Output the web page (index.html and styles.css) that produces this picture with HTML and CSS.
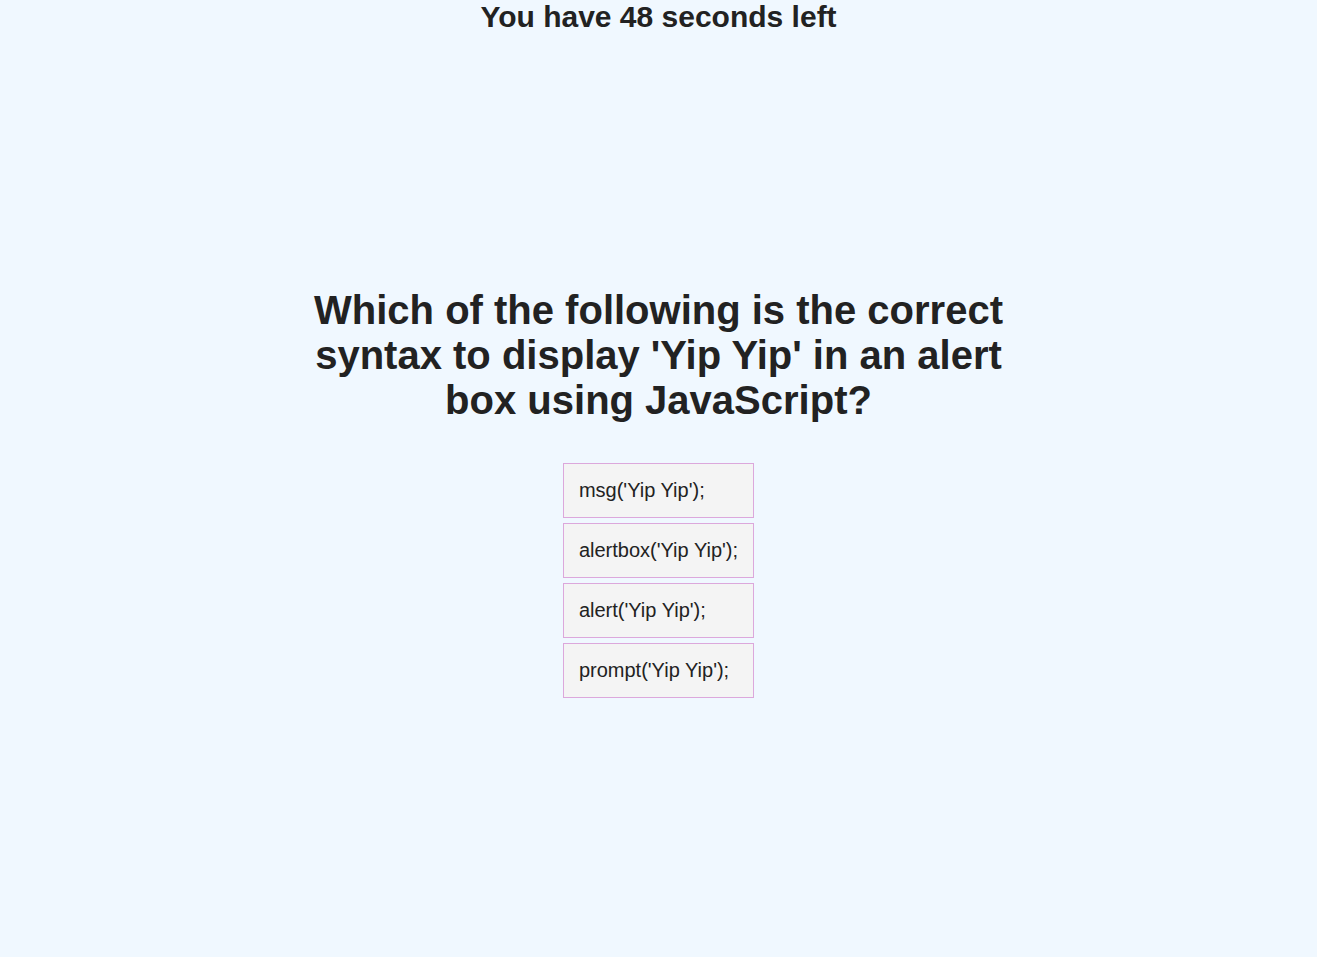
FILE: index.html
```html
<!DOCTYPE html>
<html>
<head>
<meta charset="utf-8">
<link rel="stylesheet" href="styles.css">
</head>
<body>
<header class="timer">You have 48 seconds left</header>
<main class="quiz">
  <h1 class="question">Which of the following is the correct syntax to display 'Yip Yip' in an alert box using JavaScript?</h1>
  <div class="choices">
    <button class="choice">msg('Yip Yip');</button>
    <button class="choice">alertbox('Yip Yip');</button>
    <button class="choice">alert('Yip Yip');</button>
    <button class="choice">prompt('Yip Yip');</button>
  </div>
</main>
</body>
</html>
```
FILE: styles.css
```css
html, body {
  margin: 0;
  padding: 0;
  background: #f0f8ff;
  color: #222;
  font-family: "Liberation Sans", Arial, sans-serif;
}
body {
  min-height: 957px;
}
.timer {
  text-align: center;
  font-weight: bold;
  font-size: 30px;
  line-height: 34px;
}
.quiz {
  display: flex;
  flex-direction: column;
  align-items: center;
  padding-top: 254px;
}
.question {
  width: 720px;
  margin: 0 0 40px;
  text-align: center;
  font-size: 40px;
  line-height: 45px;
  font-weight: bold;
}
.choices {
  display: inline-flex;
  flex-direction: column;
  gap: 5px;
}
.choice {
  display: block;
  text-align: left;
  background: #f4f4f4;
  border: 1px solid #dca8dc;
  color: #222;
  font-family: "Liberation Sans", Arial, sans-serif;
  font-size: 20px;
  height: 55px;
  padding: 0 15px;
  margin: 0;
}
```
